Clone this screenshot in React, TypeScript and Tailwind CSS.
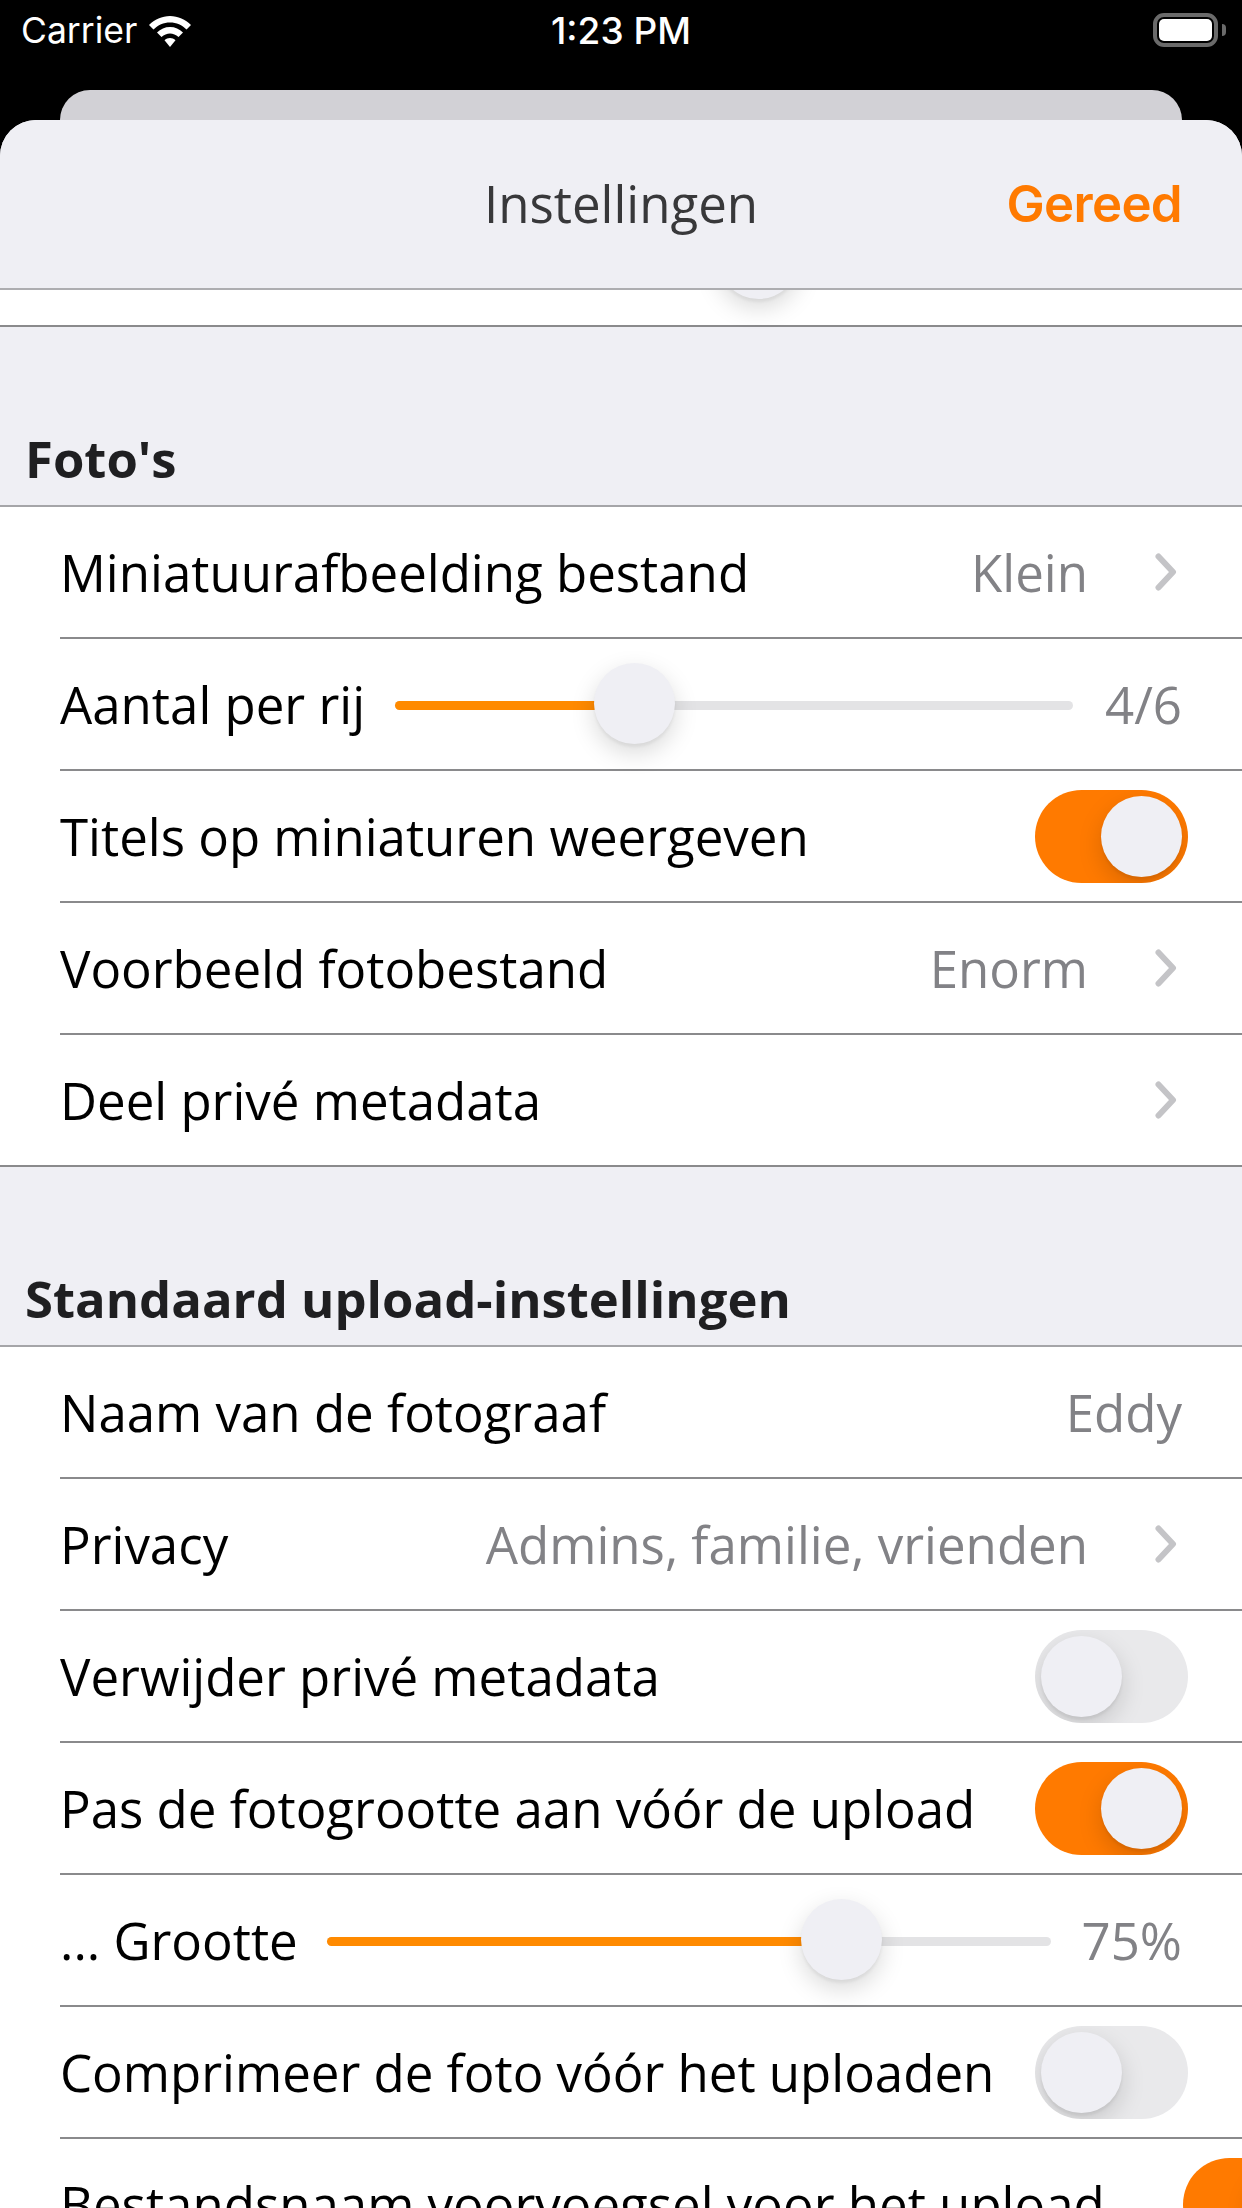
import { ReactNode } from 'react'

const openSans = "font-['Open_Sans',sans-serif]"

function Chevron() {
  return (
    <svg width="22" height="38" viewBox="0 0 22 38" className="ml-[67px] mr-[5px] shrink-0">
      <path d="M3.5 3.5 L18 19 L3.5 34.5" fill="none" stroke="#c4c4c7" strokeWidth="6" strokeLinecap="round" strokeLinejoin="round" />
    </svg>
  )
}

function Toggle({ on, className = 'ml-auto' }: { on: boolean; className?: string }) {
  return (
    <div
      className={`relative overflow-hidden w-[153px] h-[93px] rounded-full shrink-0 mr-[-6px] flex items-center px-[6px] ${className} ${
        on ? 'bg-[#ff7a00] justify-end' : 'bg-[#e9e9eb] justify-start'
      }`}
    >
      <div className="w-[81px] h-[81px] rounded-full bg-[#efeff4] shadow-[0_9px_24px_rgba(0,0,0,0.15),0_3px_3px_rgba(0,0,0,0.06)]" />
    </div>
  )
}

function Slider({ width, percent }: { width: number; percent: number }) {
  return (
    <div className="relative h-[9px] rounded-full bg-[#e3e3e5] shrink-0" style={{ width }}>
      <div className="h-full rounded-full bg-[#ff8a00]" style={{ width: `${percent}%` }} />
      <div
        className="absolute top-[-38px] w-[81px] h-[81px] -ml-[40px] rounded-full bg-[#efeff4] shadow-[0_9px_24px_rgba(0,0,0,0.15),0_3px_3px_rgba(0,0,0,0.05)]"
        style={{ left: `${percent}%` }}
      />
    </div>
  )
}

function Row({ label, children, last }: { label: string; children?: ReactNode; last?: boolean }) {
  return (
    <div className="pl-[60px]">
      <div
        className={`flex items-center pr-[60px] ${last ? 'h-[130px]' : 'h-[132px] border-b-[2px] border-[#8a8a8c]'}`}
      >
        <span className="text-[51px] text-black whitespace-nowrap">{label}</span>
        {children}
      </div>
    </div>
  )
}

function Value({ children }: { children: ReactNode }) {
  return <span className="ml-auto text-[51px] text-[#828286] whitespace-nowrap">{children}</span>
}

function Section({ title, children }: { title: string; children: ReactNode }) {
  return (
    <>
      <div className="h-[180px] flex items-end pl-[25px] pb-[14px] border-b-[2px] border-[#a5a5a8]">
        <h2 className="text-[50.800px] font-bold leading-[64px] text-[#1f1f21]">{title}</h2>
      </div>
      <div className="bg-white border-b-[2px] border-[#8a8a8c]">{children}</div>
    </>
  )
}

export default function App() {
  return (
    <div className={`w-[1242px] h-[2208px] overflow-hidden bg-black flex flex-col ${openSans}`}>
      {/* Status bar */}
      <div className="h-[90px] shrink-0 flex items-start justify-between pl-[21px] pr-[22px] pt-[8px] text-white font-['Inter',sans-serif] leading-[46px] relative">
        <div className="flex items-center gap-[10px] text-[35.500px]">
          <span>Carrier</span>
          <svg width="46" height="34" viewBox="0 0 46 34">
            <path d="M23 2 C31 2 38.500 5.500 44 11 L39.500 15.500 C35 11 29.500 8.500 23 8.500 C16.500 8.500 11 11 6.500 15.500 L2 11 C7.500 5.500 15 2 23 2 Z" fill="#fff" />
            <path d="M23 13 C28 13 32.500 15 36 18.500 L31.500 23 C29 20.800 26 19.500 23 19.500 C20 19.500 17 20.800 14.500 23 L10 18.500 C13.500 15 18 13 23 13 Z" fill="#fff" />
            <path d="M23 24 C25 24 27 24.800 28.500 26.200 L23 33 L17.500 26.200 C19 24.800 21 24 23 24 Z" fill="#fff" />
          </svg>
        </div>
        <span className="absolute left-0 right-0 text-center font-medium text-[37px]">1:23 PM</span>
        <div className="flex items-center mt-[5px] mr-[-6px]">
          <div className="w-[65px] h-[34px] rounded-[11px] border-[4px] border-[#6a6a6a] p-[2px]">
            <div className="w-full h-full rounded-[5px] bg-white" />
          </div>
          <div className="ml-[4px] w-[4px] h-[12px] rounded-r-full bg-[#6a6a6a]" />
        </div>
      </div>

      {/* Card behind */}
      <div className="h-[30px] mx-[60px] shrink-0 rounded-t-[30px] bg-[#d2d1d6]" />

      {/* Sheet */}
      <div className="flex-1 min-h-0 rounded-t-[36px] overflow-hidden bg-[#efeff4] flex flex-col">
        <div className="relative z-10 h-[170px] shrink-0 bg-[#efeff4] border-b-[2px] border-[#adadb0] flex items-center justify-end pr-[60px]">
          <span className="absolute left-0 right-0 text-center text-[51px] text-[#38383a] -mt-[2px]">Instellingen</span>
          <span className="relative text-[51px] font-semibold tracking-[-0.7px] font-['Inter',sans-serif] text-[#ff7a00]">Gereed</span>
        </div>

        <div className="flex-1 min-h-0 overflow-hidden">
          {/* Previous section scrolled under the nav bar */}
          <div className="-mt-[95px] bg-white border-b-[2px] border-[#8a8a8c] h-[132px] flex items-center pl-[360px]">
            <div className="mt-[1px]">
              <Slider width={560} percent={71} />
            </div>
          </div>

          <Section title="Foto's">
            <Row label="Miniatuurafbeelding bestand">
              <Value>Klein</Value>
              <Chevron />
            </Row>
            <Row label="Aantal per rij">
              <div className="ml-[30px] mt-[3px]">
                <Slider width={678} percent={35.200} />
              </div>
              <Value>4/6</Value>
            </Row>
            <Row label="Titels op miniaturen weergeven">
              <Toggle on />
            </Row>
            <Row label="Voorbeeld fotobestand">
              <Value>Enorm</Value>
              <Chevron />
            </Row>
            <Row label="Deel privé metadata" last>
              <div className="ml-auto" />
              <Chevron />
            </Row>
          </Section>

          <Section title="Standaard upload-instellingen">
            <Row label="Naam van de fotograaf">
              <Value>Eddy</Value>
            </Row>
            <Row label="Privacy">
              <Value>Admins, familie, vrienden</Value>
              <Chevron />
            </Row>
            <Row label="Verwijder privé metadata">
              <Toggle on={false} />
            </Row>
            <Row label="Pas de fotogrootte aan vóór de upload">
              <Toggle on />
            </Row>
            <Row label="... Grootte">
              <div className="ml-[29px] mt-[3px]">
                <Slider width={724} percent={71} />
              </div>
              <Value>75%</Value>
            </Row>
            <Row label="Comprimeer de foto vóór het uploaden">
              <Toggle on={false} />
            </Row>
            <Row label="Bestandsnaam voorvoegsel voor het upload">
              <Toggle on className="ml-[78px]" />
            </Row>
          </Section>
        </div>
      </div>
    </div>
  )
}
